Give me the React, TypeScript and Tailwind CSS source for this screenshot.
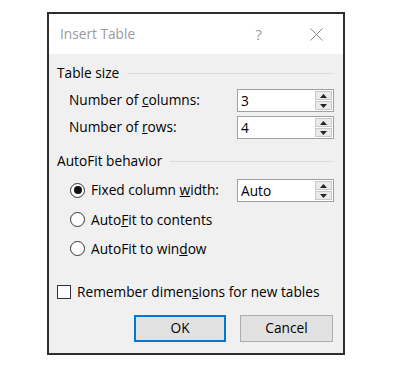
import React from 'react';

const font = { fontFamily: '"Open Sans", "Noto Sans", "Liberation Sans", sans-serif' };

function Spin({ value }: { value: string }) {
  return (
    <div className="flex h-[23px] w-[97px] border border-[#a0a0a0] bg-white">
      <div className="flex-1 pl-[3px] text-[13.7px] leading-[21px] text-black">{value}</div>
      <div className="flex w-[19px] flex-col gap-[1px] p-[1px]">
        <div className="flex flex-1 items-center justify-center border border-[#c8c8c8] bg-[#eaeaea]">
          <svg width="7" height="4" viewBox="0 0 7 4"><path d="M3.5 0 L7 4 L0 4 Z" fill="#222" /></svg>
        </div>
        <div className="flex flex-1 items-center justify-center border border-[#c8c8c8] bg-[#eaeaea]">
          <svg width="7" height="4" viewBox="0 0 7 4"><path d="M0 0 L7 0 L3.5 4 Z" fill="#222" /></svg>
        </div>
      </div>
    </div>
  );
}

function Radio({ checked, children }: { checked?: boolean; children: React.ReactNode }) {
  return (
    <div className="flex items-center gap-[6px]">
      <span className="flex h-[15px] w-[15px] items-center justify-center rounded-full border border-[#333] bg-white">
        {checked && <span className="h-[8px] w-[8px] rounded-full bg-[#111]" />}
      </span>
      <span className="text-[13.7px] text-black">{children}</span>
    </div>
  );
}

function GroupHeader({ title }: { title: string }) {
  return (
    <div className="flex h-[18px] items-center gap-[8px] pr-[10px]">
      <span className="text-[13.7px] text-black">{title}</span>
      <div className="h-px flex-1 bg-[#dcdcdc]" />
    </div>
  );
}

export default function App() {
  return (
    <div className="h-[384px] w-[406px] bg-white pl-[47px] pt-[12px]" style={font}>
      <div className="flex h-[343px] w-[298px] flex-col border-2 border-[#2e2e2e] bg-[#f0f0f0]">
        <div className="flex h-[40px] items-center bg-white pl-[11px]">
          <span className="text-[13.7px] text-[#9a9a9a]">Insert Table</span>
          <span className="ml-auto mr-[48px] text-[15px] text-[#9a9a9a]">?</span>
          <svg className="mr-[20px]" width="13" height="13" viewBox="0 0 13 13">
            <path d="M0.5 0.5 L12.5 12.5 M12.5 0.5 L0.5 12.5" stroke="#8a8a8a" strokeWidth="1" />
          </svg>
        </div>
        <div className="flex flex-1 flex-col pl-[8px]">
          <div className="mt-[10px]">
            <GroupHeader title="Table size" />
          </div>
          <div className="mt-[7px] flex flex-col gap-[4px] pl-[12px]">
            <div className="flex items-center">
              <span className="w-[168px] text-[13.7px] text-black">
                Number of <u>c</u>olumns:
              </span>
              <Spin value="3" />
            </div>
            <div className="flex items-center">
              <span className="w-[168px] text-[13.7px] text-black">
                Number of <u>r</u>ows:
              </span>
              <Spin value="4" />
            </div>
          </div>
          <div className="mt-[13px]">
            <GroupHeader title="AutoFit behavior" />
          </div>
          <div className="mt-[9px] flex flex-col pl-[13px]">
            <div className="flex h-[23px] items-center">
              <div className="w-[167px]">
                <Radio checked>
                  Fixed column <u>w</u>idth:
                </Radio>
              </div>
              <Spin value="Auto" />
            </div>
            <div className="mt-[7px] flex h-[22px] items-center">
              <Radio>
                Auto<u>F</u>it to contents
              </Radio>
            </div>
            <div className="mt-[7px] flex h-[22px] items-center">
              <Radio>
                AutoFit to win<u>d</u>ow
              </Radio>
            </div>
          </div>
          <div className="mt-[23px] flex h-[18px] items-center gap-[6px]">
            <span className="h-[14px] w-[14px] border border-[#333] bg-white" />
            <span className="text-[13.7px] text-black">
              Remember dimen<u>s</u>ions for new tables
            </span>
          </div>
          <div className="mt-[14px] flex justify-end gap-[14px] pr-[10px]">
            <button className="h-[27px] w-[92px] border-2 border-[#0078d7] bg-[#e1e1e1] text-[13.7px] text-black">
              OK
            </button>
            <button className="h-[27px] w-[93px] border border-[#adadad] bg-[#e1e1e1] text-[13.7px] text-black">
              Cancel
            </button>
          </div>
        </div>
      </div>
    </div>
  );
}
